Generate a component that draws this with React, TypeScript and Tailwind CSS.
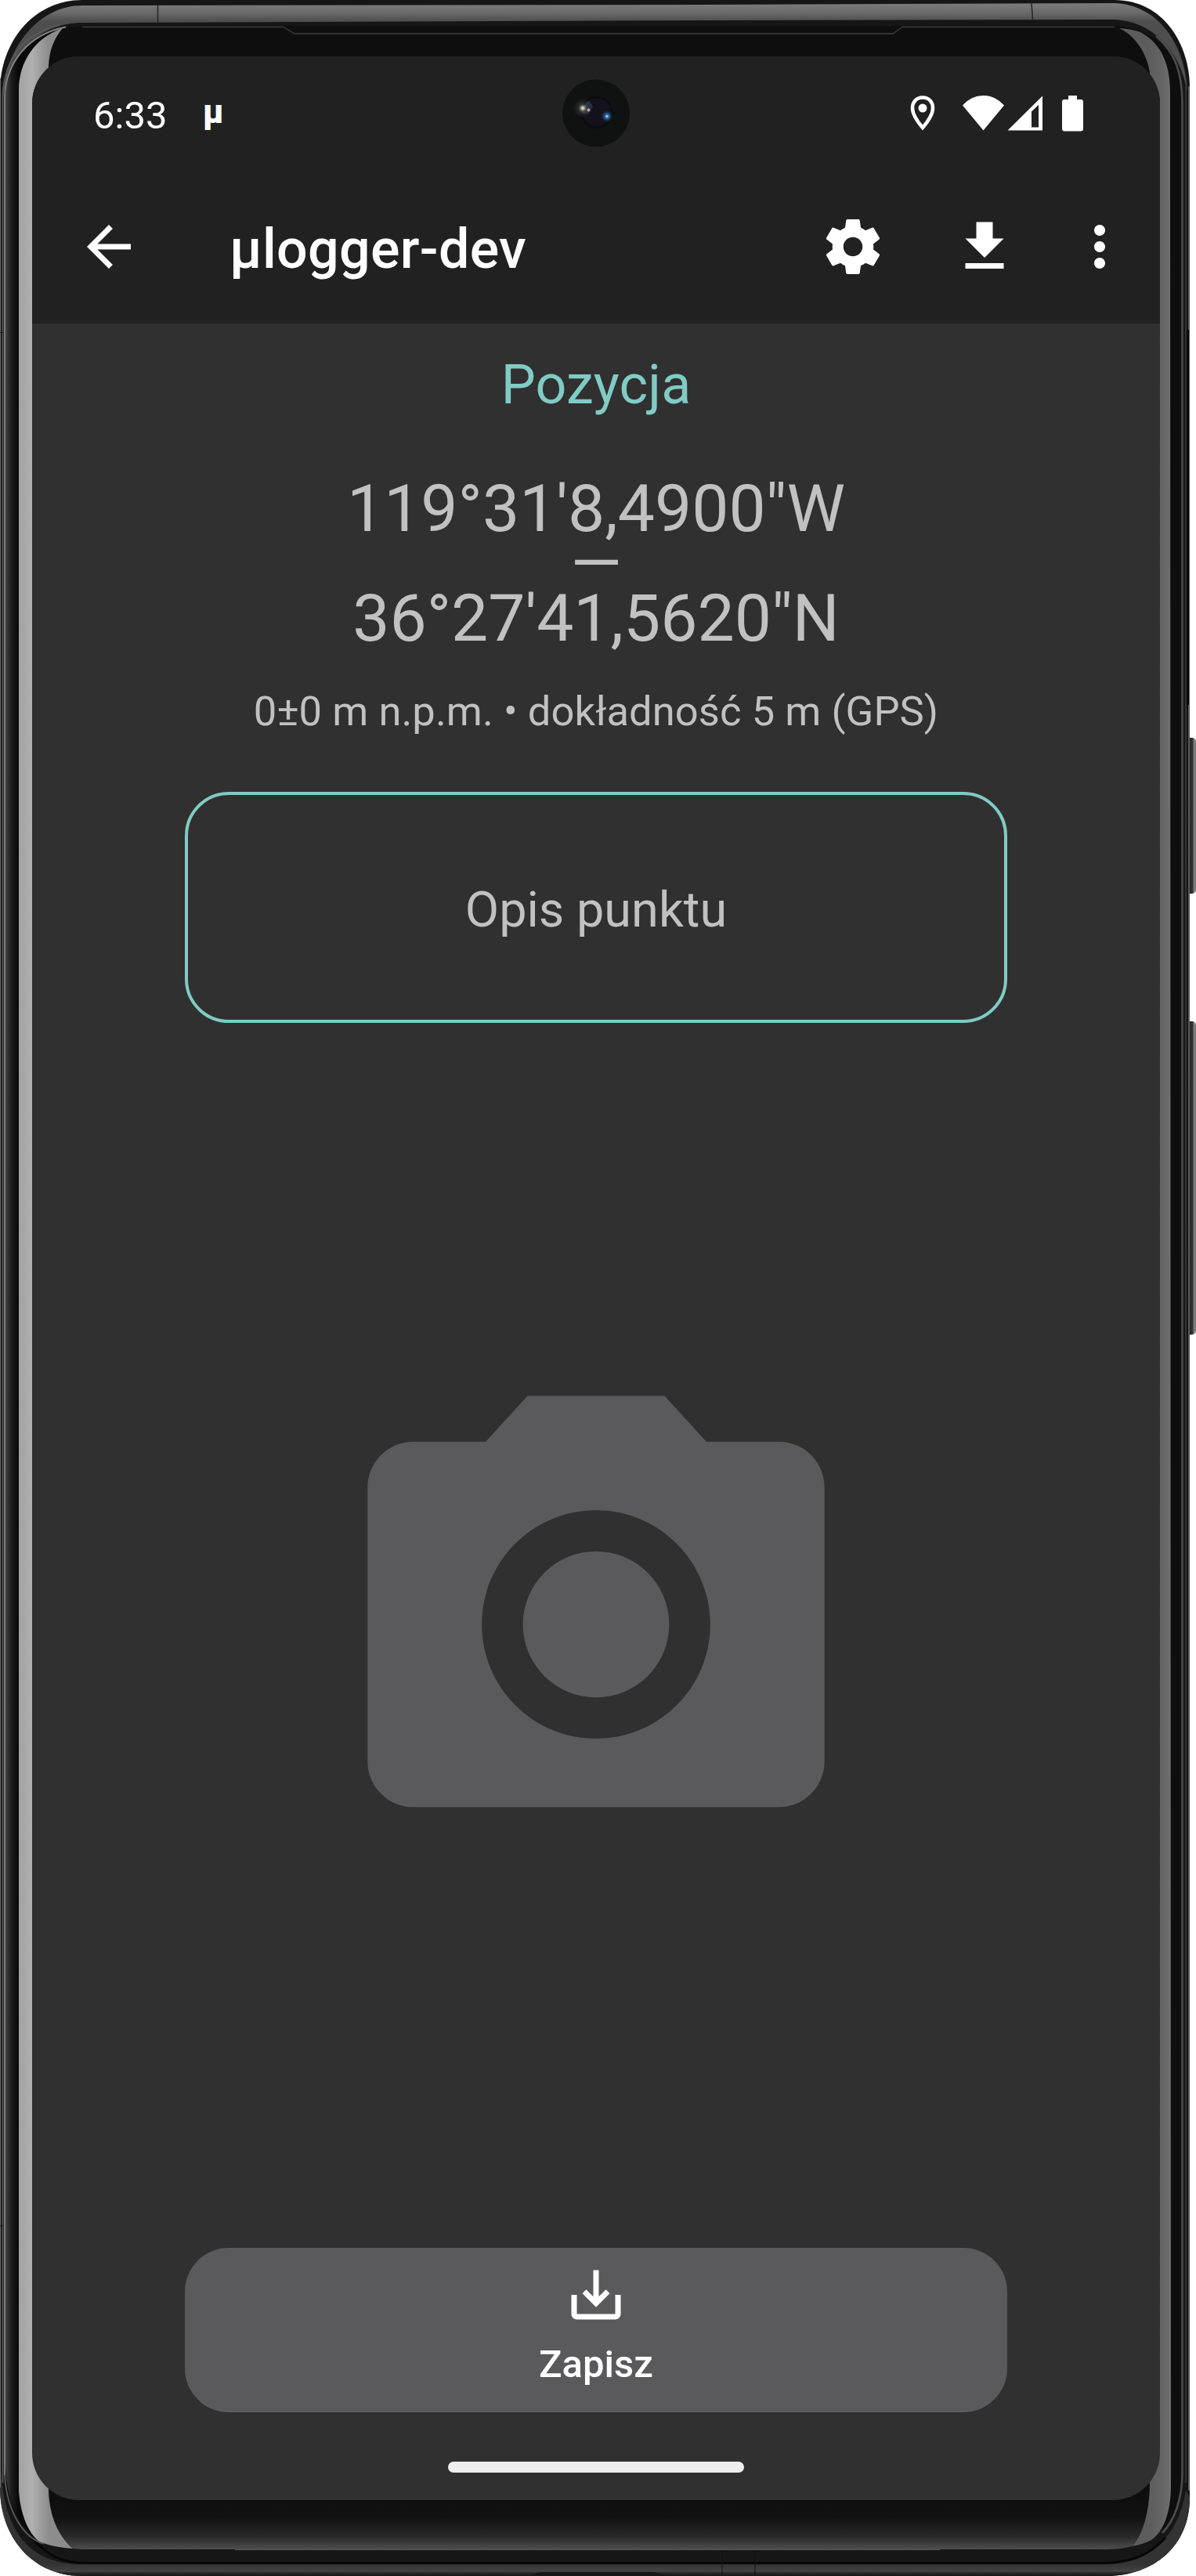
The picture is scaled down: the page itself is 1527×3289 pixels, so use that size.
function PhoneFrame() {
  return (
    <svg className="absolute inset-0" width="1527" height="3289" viewBox="0 0 1527 3289" fill="none" aria-hidden="true">
      <defs>
        <linearGradient id="topMetal" x1="0" y1="7" x2="0" y2="27" gradientUnits="userSpaceOnUse">
          <stop offset="0" stopColor="#787878" />
          <stop offset="0.5" stopColor="#686868" />
          <stop offset="1" stopColor="#4e4e4e" />
        </linearGradient>
        <linearGradient id="leftEdge" x1="7" y1="0" x2="24" y2="0" gradientUnits="userSpaceOnUse">
          <stop offset="0" stopColor="#444" />
          <stop offset="0.45" stopColor="#1c1c1c" />
          <stop offset="1" stopColor="#080808" />
        </linearGradient>
        <linearGradient id="leftGlass" x1="24" y1="0" x2="62" y2="0" gradientUnits="userSpaceOnUse">
          <stop offset="0" stopColor="#a2a2a2" />
          <stop offset="0.45" stopColor="#b0b0b0" />
          <stop offset="1" stopColor="#8c8c8c" />
        </linearGradient>
        <linearGradient id="rightGlass" x1="1465" y1="0" x2="1495" y2="0" gradientUnits="userSpaceOnUse">
          <stop offset="0" stopColor="#5c5c5c" />
          <stop offset="0.6" stopColor="#646464" />
          <stop offset="1" stopColor="#707070" />
        </linearGradient>
        <linearGradient id="bottomGlass" x1="0" y1="3192" x2="0" y2="3255" gradientUnits="userSpaceOnUse">
          <stop offset="0" stopColor="#0e0e0e" />
          <stop offset="0.35" stopColor="#121212" />
          <stop offset="0.75" stopColor="#2a2a2a" />
          <stop offset="1" stopColor="#4e4e4e" />
        </linearGradient>
        <linearGradient id="bottomMetal" x1="0" y1="3274" x2="0" y2="3289" gradientUnits="userSpaceOnUse">
          <stop offset="0" stopColor="#333" />
          <stop offset="0.6" stopColor="#424242" />
          <stop offset="0.75" stopColor="#262626" />
          <stop offset="1" stopColor="#181818" />
        </linearGradient>
        <linearGradient id="sideKey" x1="1518" y1="0" x2="1527" y2="0" gradientUnits="userSpaceOnUse">
          <stop offset="0" stopColor="#222" />
          <stop offset="0.5" stopColor="#333" />
          <stop offset="0.75" stopColor="#8a8a8a" />
          <stop offset="1" stopColor="#666" />
        </linearGradient>
      </defs>

      {/* side keys */}
      <rect x="1510" y="942" width="17" height="199" rx="5" fill="url(#sideKey)" />
      <rect x="1510" y="1304" width="17" height="400" rx="5" fill="url(#sideKey)" />

      {/* body */}
      <path d="M105 0H1423C1485 0 1519 56 1519 112V3189C1519 3250 1474 3289 1412 3289H104C42 3289 0 3240 0 3176V110C3 50 45 0 105 0Z" fill="#161616" />

      {/* bottom metal rim */}
      <path d="M1 3150C4 3230 36 3274 104 3274H1412C1470 3274 1505 3236 1514 3180L1519 3189C1519 3250 1474 3289 1412 3289H104C42 3289 0 3240 0 3176Z" fill="url(#bottomMetal)" />
      <path d="M40 3240C62 3264 78 3271 104 3272.500H1412C1446 3271 1468 3262 1488 3240" stroke="#070707" strokeWidth="3" />

      {/* top metal rim */}
      <path d="M3 130C5 60 50 7 105 7L900 6L1423 4C1478 6 1514 56 1516 118C1506 60 1468 27 1423 25L900 26L100 29C50 32 12 66 3 130Z" fill="url(#topMetal)" />
      <path d="M201.500 7V29M1317 4L1318.500 25" stroke="#222" strokeWidth="1.5" />

      {/* glass edge */}
      <path d="M105 33H1423C1476 36 1509 72 1510 122V3165C1508 3215 1476 3255 1412 3255H104C42 3253 7 3212 7 3160V122C10 76 40 36 105 33Z" fill="#0e0e0e" />
      <path d="M7 3140V122C9 80 38 42 80 36C44 50 24 80 24 115V3180C26 3210 36 3232 50 3245C22 3226 7 3190 7 3140Z" fill="url(#leftEdge)" />
      <path d="M105 34.500H362L376 43H1140L1152 34.500H1423" stroke="#3c3c3c" strokeWidth="1.3" />
      <path d="M62 3192H1466C1464 3216 1456 3240 1446 3251Q1430 3255 1412 3255H104L93 3254C74 3236 64 3215 62 3192Z" fill="url(#bottomGlass)" />

      {/* glass reflections */}
      <path d="M80 36C44 48 24 80 24 115V3180C26 3210 36 3234 50 3245Q70 3253 93 3254C70 3234 62 3204 62 3176V85C63 62 70 48 80 36Z" fill="url(#leftGlass)" />
      <path d="M1429 36Q1445 37 1456 41C1484 56 1494 84 1494 118L1495 3178C1494 3208 1486 3232 1470 3243Q1458 3249 1446 3251C1462 3232 1468 3200 1468 3168V92C1464 68 1450 46 1429 36Z" fill="url(#rightGlass)" />

      {/* left rails */}
      <path d="M0.500 100V3176" stroke="#6c6c6c" />
      <path d="M3.500 3170V120C6 76 30 42 76 32" stroke="#5a5a5a" strokeWidth="1.6" />
      <path d="M6 3160V122C8 82 34 44 84 34.500" stroke="#858585" strokeWidth="1.8" />
      <path d="M6 3160C9 3208 30 3240 56 3248" stroke="#5a5a5a" strokeWidth="1.8" />
      <path d="M0 424.500H4M0 2842H4" stroke="#111" />

      {/* right rails */}
      <path d="M1476 46C1500 66 1509 92 1509.500 130V3160C1509 3190 1500 3218 1484 3234" stroke="#4c4c4c" strokeWidth="2.6" />
      <path d="M1514 110V3170" stroke="#3c3c3c" strokeWidth="1.5" />
      <path d="M1518 110V3180" stroke="#777" strokeWidth="1.4" />
      <path d="M1516.500 421V900" stroke="#0a0a0a" strokeWidth="3" />

      {/* bottom seams */}
      <path d="M300 3255.500H1200" stroke="#555" />
      <path d="M922 3256V3288M964 3256V3288" stroke="#111" />
      <path d="M676 3289Q686 3284 694 3284H830Q840 3284 850 3289Z" fill="#161616" />
    </svg>
  );
}

function CameraCutout() {
  return (
    <svg className="absolute left-[677px] top-[29px]" width="88" height="88" viewBox="0 0 88 88" aria-hidden="true">
      <defs>
        <radialGradient id="glow">
          <stop offset="0" stopColor="#fffff0" />
          <stop offset="0.2" stopColor="#a4aa9c" stopOpacity="0.8" />
          <stop offset="0.4" stopColor="#4a5048" stopOpacity="0.5" />
          <stop offset="1" stopColor="#303530" stopOpacity="0" />
        </radialGradient>
        <radialGradient id="blueGlow">
          <stop offset="0" stopColor="#e0f4ff" />
          <stop offset="0.25" stopColor="#2f7cc0" />
          <stop offset="1" stopColor="#10233c" stopOpacity="0" />
        </radialGradient>
      </defs>
      <circle cx="43" cy="43.500" r="43" fill="#101111" />
      <circle cx="44" cy="42.500" r="20.500" fill="#0b0c10" />
      <circle cx="44" cy="42.500" r="18" fill="#15111b" />
      <path d="M25 44V36L34 27L39 35L33 44Z" fill="#2c465c" opacity="0.6" />
      <circle cx="26" cy="37" r="13" fill="url(#glow)" />
      <circle cx="33.500" cy="39.500" r="2" fill="#c896b8" />
      <circle cx="57" cy="47.500" r="8" fill="url(#blueGlow)" />
    </svg>
  );
}

function StatusBar() {
  return (
    <div className="relative flex h-[145px] items-center pl-[78px] text-white">
      <span className="mt-[7px] w-[140px] text-[49px] leading-[58px]">6:33</span>
      <span className="mt-[-4px] text-[42px] leading-[50px] font-black">µ</span>
      <CameraCutout />
      <svg className="ml-auto mr-[93px]" width="230" height="50" viewBox="0 0 230 50" fill="#fff" aria-hidden="true">
        <path d="M20 4.500C11.500 4.500 7 10.500 7 18C7 27 14 36 20 43C26 36 33 27 33 18C33 10.500 28.500 4.500 20 4.500Z" fill="none" stroke="#fff" strokeWidth="4.500" />
        <circle cx="20" cy="18" r="5.500" />
        <path d="M71 14.500Q82 2 97.500 2T124 14.500L97.500 46.500Z" />
        <path fillRule="evenodd" d="M128.500 46.500L173 2.500V46.500ZM159 22.500V42.500H168V14Z" />
        <path d="M206 2H217V7H222Q225 7 225 10V44.500Q225 47.500 222 47.500H201Q198 47.500 198 44.500V10Q198 7 201 7H206Z" />
      </svg>
    </div>
  );
}

function AppBar() {
  return (
    <header className="flex h-[196px] items-center pl-[56px] text-white">
      <svg width="84" height="84" viewBox="0 0 24 24" fill="currentColor">
        <path d="M20 11H7.830l5.590-5.590L12 4l-8 8 8 8 1.410-1.410L7.830 13H20v-2z" />
      </svg>
      <h1 className="mt-[6px] ml-[112px] text-[70px] leading-[82px] font-medium tracking-[0.3px]">µlogger-dev</h1>
      <div className="ml-auto flex items-center">
        <svg width="84" height="84" viewBox="0 0 24 24" fill="currentColor">
          <path d="M19.430 12.980c.040-.320.070-.640.070-.980s-.030-.660-.070-.980l2.110-1.650c.190-.150.240-.420.120-.640l-2-3.460c-.120-.220-.390-.300-.610-.220l-2.490 1c-.520-.400-1.080-.730-1.690-.980l-.380-2.650C14.460 2.180 14.250 2 14 2h-4c-.250 0-.460.180-.490.420l-.380 2.650c-.610.250-1.170.590-1.690.980l-2.490-1c-.230-.090-.490 0-.610.220l-2 3.460c-.130.220-.070.490.120.640l2.110 1.650c-.040.320-.070.650-.070.980s.030.660.070.980l-2.110 1.650c-.190.150-.240.420-.120.640l2 3.460c.120.220.390.300.610.220l2.490-1c.520.400 1.080.730 1.690.980l.380 2.650c.030.240.240.420.490.420h4c.250 0 .460-.180.490-.420l.380-2.650c.610-.250 1.170-.590 1.690-.980l2.490 1c.230.090.490 0 .610-.220l2-3.460c.120-.220.070-.490-.120-.640l-2.110-1.650zM12 15.500c-1.930 0-3.500-1.570-3.500-3.500s1.570-3.500 3.500-3.500 3.500 1.570 3.500 3.500-1.570 3.500-3.500 3.500z" />
        </svg>
        <svg className="ml-[84px]" width="84" height="84" viewBox="0 0 24 24" fill="currentColor">
          <path d="M19 9h-4V3H9v6H5l7 7 7-7zM5 18v2h14v-2H5z" />
        </svg>
        <svg className="mr-[35px] ml-[63px]" width="84" height="84" viewBox="0 0 24 24" fill="currentColor">
          <path d="M12 8c1.100 0 2-.900 2-2s-.900-2-2-2-2 .900-2 2 .900 2 2 2zm0 2c-1.100 0-2 .900-2 2s.900 2 2 2 2-.900 2-2-.900-2-2-2zm0 6c-1.100 0-2 .900-2 2s.900 2 2 2 2-.900 2-2-.900-2-2-2z" />
        </svg>
      </div>
    </header>
  );
}

export default function App() {
  return (
    <div className="relative h-[3289px] w-[1527px] overflow-hidden bg-white pt-[72px] pl-[41px] font-['Roboto',sans-serif]">
      <PhoneFrame />
      <div className="relative flex h-[3120px] w-[1440px] flex-col overflow-hidden rounded-[60px] bg-[#303030]">
        <div className="bg-[#212121]">
          <StatusBar />
          <AppBar />
        </div>
        <main className="flex flex-1 flex-col items-center pt-[37px] text-[#c1c1c1]">
          <h2 className="text-[70px] leading-[82px] tracking-[0.1px] text-[#80cbc4]">Pozycja</h2>
          <p className="mt-[83px] text-center text-[84px] leading-[70px]">
            119°31'8,4900"W
            <br />—<br />
            36°27'41,5620"N
          </p>
          <p className="mt-[52px] text-[52.5px] leading-[62px] tracking-[0.07px]">0±0 m n.p.m. • dokładność 5 m (GPS)</p>
          <div className="mt-[72px] flex h-[295px] w-[1050px] items-center justify-center rounded-[56px] border-4 border-[#80cbc4] pt-[7px] text-[63px] leading-[74px]">
            Opis punktu
          </div>
          <svg className="mt-[418px]" width="700" height="700" viewBox="0 0 24 24" fill="#5a5a5c">
            <circle cx="12" cy="12" r="3.200" />
            <path d="M9 2L7.170 4H4c-1.100 0-2 .900-2 2v12c0 1.100.900 2 2 2h16c1.100 0 2-.900 2-2V6c0-1.100-.900-2-2-2h-3.170L15 2H9zm3 15c-2.760 0-5-2.240-5-5s2.240-5 5-5 5 2.240 5 5-2.240 5-5 5z" />
          </svg>
          <button className="mt-auto flex h-[210px] w-[1050px] flex-col items-center rounded-[56px] bg-[#5a5a5c] pt-[18px] text-white">
            <svg width="84" height="84" viewBox="0 0 24 24" fill="currentColor">
              <path d="M19 12v7H5v-7H3v7c0 1.100.900 2 2 2h14c1.100 0 2-.900 2-2v-7h-2zm-6 .670l2.590-2.580L17 11.500l-5 5-5-5 1.410-1.410L11 12.670V3h2v9.670z" />
            </svg>
            <span className="mt-[18px] text-[49px] leading-[58px] font-medium">Zapisz</span>
          </button>
          <div className="mt-[63px] mb-[35px] h-[14px] w-[378px] rounded-[7px] bg-[#eee]" />
        </main>
      </div>
    </div>
  );
}
